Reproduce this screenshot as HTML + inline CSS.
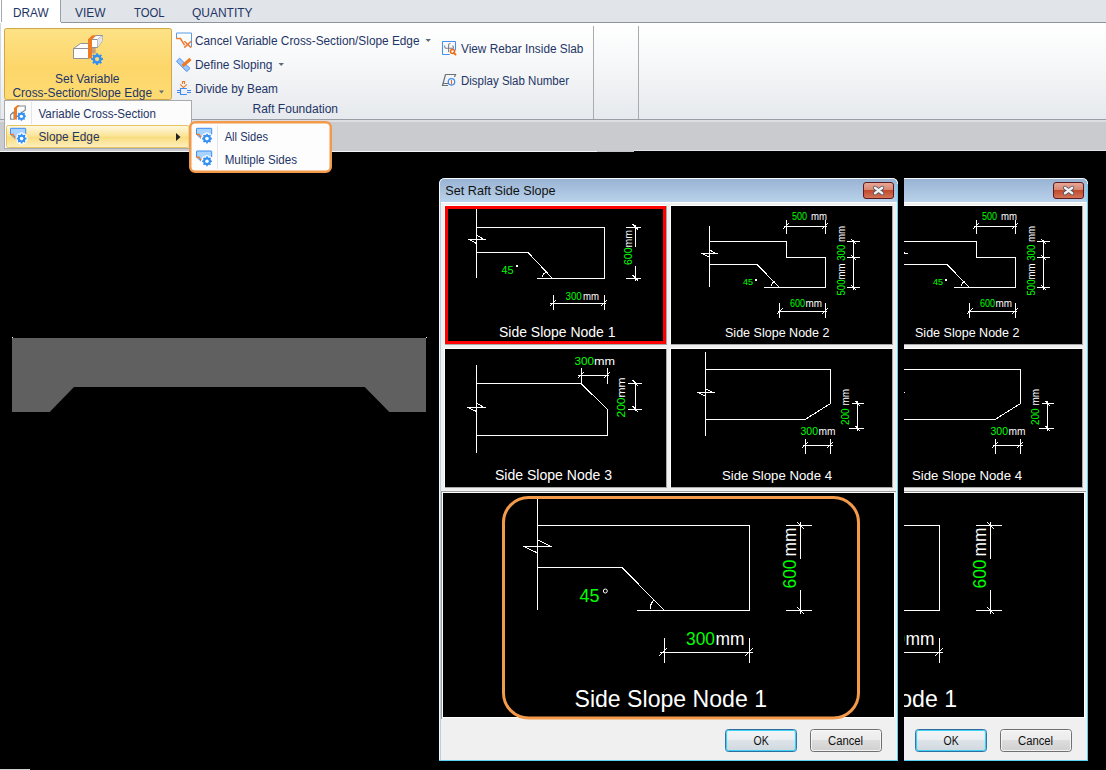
<!DOCTYPE html><html><head><meta charset="utf-8"><style>html,body{margin:0;padding:0;background:#000;overflow:hidden}svg{display:block}text{font-family:"Liberation Sans",sans-serif}</style></head><body>
<svg width="1106" height="770" viewBox="0 0 1106 770">
<defs>
<linearGradient id="gRib" x1="0" y1="0" x2="0" y2="1"><stop offset="0" stop-color="#ffffff"/><stop offset="0.35" stop-color="#f8f9fa"/><stop offset="1" stop-color="#e6e9ed"/></linearGradient>
<linearGradient id="gBig" x1="0" y1="0" x2="0" y2="1"><stop offset="0" stop-color="#fde286"/><stop offset="0.55" stop-color="#fdd66a"/><stop offset="1" stop-color="#fddb72"/></linearGradient>
<linearGradient id="gHi" x1="0" y1="0" x2="0" y2="1"><stop offset="0" stop-color="#fef9e2"/><stop offset="0.45" stop-color="#fbe59a"/><stop offset="0.55" stop-color="#f9dd80"/><stop offset="1" stop-color="#fdf0c0"/></linearGradient>
<linearGradient id="gTitle" x1="0" y1="0" x2="0" y2="1"><stop offset="0" stop-color="#98b3d3"/><stop offset="1" stop-color="#bad2eb"/></linearGradient>
<linearGradient id="gClose" x1="0" y1="0" x2="0" y2="1"><stop offset="0" stop-color="#eaa99a"/><stop offset="0.45" stop-color="#d88870"/><stop offset="0.5" stop-color="#c24a2c"/><stop offset="1" stop-color="#d5765a"/></linearGradient>
<linearGradient id="gOK" x1="0" y1="0" x2="0" y2="1"><stop offset="0" stop-color="#f2f4f6"/><stop offset="0.45" stop-color="#eceff2"/><stop offset="0.5" stop-color="#dde3e8"/><stop offset="1" stop-color="#cfd8df"/></linearGradient>
<linearGradient id="gCan" x1="0" y1="0" x2="0" y2="1"><stop offset="0" stop-color="#f2f2f2"/><stop offset="0.5" stop-color="#ebebeb"/><stop offset="0.5" stop-color="#dddddd"/><stop offset="1" stop-color="#cfcfcf"/></linearGradient>
<clipPath id="clipR"><rect x="904" y="0" width="202" height="770"/></clipPath>
</defs>
<rect x="0" y="0" width="1106" height="23" fill="#e1e4e8" />
<rect x="0" y="23" width="1106" height="96" fill="url(#gRib)" />
<line x1="0" y1="22.5" x2="1106" y2="22.5" stroke="#8f959c" stroke-width="1" />
<rect x="0" y="0" width="61" height="23" fill="#ffffff" />
<line x1="1.5" y1="0" x2="1.5" y2="22" stroke="#a4a9b0" stroke-width="1" />
<line x1="0.5" y1="23" x2="0.5" y2="119" stroke="#d4d7db" stroke-width="1" />
<line x1="60.5" y1="0" x2="60.5" y2="22" stroke="#9aa0a7" stroke-width="1" />
<line x1="0" y1="119.5" x2="1106" y2="119.5" stroke="#9a9ea4" stroke-width="1" />
<rect x="0" y="120" width="1106" height="31" fill="#c9cbcf" />
<rect x="0" y="120" width="1106" height="2" fill="#dcdee1" />
<line x1="593.5" y1="26" x2="593.5" y2="119" stroke="#a9adb2" stroke-width="1" />
<line x1="638.5" y1="26" x2="638.5" y2="119" stroke="#a9adb2" stroke-width="1" />
<text x="13" y="17" font-size="12" fill="#1e3566" textLength="35.5" lengthAdjust="spacingAndGlyphs" >DRAW</text>
<text x="75" y="17" font-size="12" fill="#1e3566" textLength="30.5" lengthAdjust="spacingAndGlyphs" >VIEW</text>
<text x="134" y="17" font-size="12" fill="#1e3566" textLength="30.5" lengthAdjust="spacingAndGlyphs" >TOOL</text>
<text x="192" y="17" font-size="12" fill="#1e3566" textLength="60.5" lengthAdjust="spacingAndGlyphs" >QUANTITY</text>
<rect x="4.5" y="28.5" width="167" height="71" rx="2" ry="2" fill="url(#gBig)" stroke="#cfa748" stroke-width="1"/>
<g stroke-linejoin="round">
<path d="M73.5 48.5 L80.5 43.5 L88.5 43.5 L88.5 58.5 L73.5 58.5 Z" fill="#fff" stroke="#8e9196" stroke-width="1"/>
<path d="M73.5 48.5 L88.5 48.5" stroke="#8e9196" stroke-width="1" fill="none"/>
<rect x="92" y="47.5" width="3.7" height="6" fill="#c9a07e"/>
<path d="M91.5 39.5 L96 35.5 L102.5 35.5 L102.5 40.5 L97.5 47.5 L91.5 47.5 Z" fill="#fff" stroke="#8e9196" stroke-width="1"/>
<path d="M91.5 39.5 L97.5 39.5 L102.5 35.5 M97.5 39.5 L97.5 47.5" stroke="#8e9196" stroke-width="1" fill="none"/>
<path d="M97.5 39.5 L102.5 35.5 L102.5 40.5 L97.5 47.5Z" fill="#e4e4e4"/>
<path d="M88 58.6 L88 39.2 L92.2 35.3 L96 35.3 L92 39.2 L92 58.6 Z" fill="#ee7a22"/>
</g>
<polygon points="96.17,54.64 96.11,53.18 98.09,53.18 98.03,54.64 99.60,55.28 100.59,54.22 101.98,55.61 100.92,56.60 101.56,58.17 103.02,58.11 103.02,60.09 101.56,60.03 100.92,61.60 101.98,62.59 100.59,63.98 99.60,62.92 98.03,63.56 98.09,65.02 96.11,65.02 96.17,63.56 94.60,62.92 93.61,63.98 92.22,62.59 93.28,61.60 92.64,60.03 91.18,60.09 91.18,58.11 92.64,58.17 93.28,56.60 92.22,55.61 93.61,54.22 94.60,55.28" fill="#3390f5"/>
<circle cx="97.1" cy="59.1" r="4.56" fill="#3390f5"/>
<circle cx="97.1" cy="59.1" r="2.16" fill="#fddb72"/>
<text x="55" y="82.7" font-size="12" fill="#1e3566" textLength="64.5" lengthAdjust="spacingAndGlyphs" >Set Variable</text>
<text x="12.5" y="96.5" font-size="12" fill="#1e3566" textLength="139.5" lengthAdjust="spacingAndGlyphs" >Cross-Section/Slope Edge</text>
<path d="M159 90.5 L164 90.5 L161.5 93.5 Z" fill="#5e6b7c"/>
<text x="195" y="45" font-size="12" fill="#1e3566" textLength="224.5" lengthAdjust="spacingAndGlyphs" >Cancel Variable Cross-Section/Slope Edge</text>
<path d="M425.5 39 L431 39 L428.2 42 Z" fill="#5e6b7c"/>
<text x="195" y="69" font-size="12" fill="#1e3566" textLength="77.5" lengthAdjust="spacingAndGlyphs" >Define Sloping</text>
<path d="M278.5 63 L284 63 L281.2 66 Z" fill="#5e6b7c"/>
<text x="195" y="92.6" font-size="12" fill="#1e3566" textLength="83" lengthAdjust="spacingAndGlyphs" >Divide by Beam</text>
<text x="252.5" y="113.4" font-size="12" fill="#1e3566" textLength="85.5" lengthAdjust="spacingAndGlyphs" >Raft Foundation</text>
<text x="461" y="52.5" font-size="12" fill="#1e3566" textLength="122.4" lengthAdjust="spacingAndGlyphs" >View Rebar Inside Slab</text>
<text x="461" y="84.5" font-size="12" fill="#1e3566" textLength="108" lengthAdjust="spacingAndGlyphs" >Display Slab Number</text>
<g fill="none" stroke-width="1.3">
<path d="M176.5 38.5 L176.5 33 L191.5 33 L191.5 47" stroke="#5b9bea" stroke-width="1"/>
<path d="M176.2 38.6 L180.4 38.6 L184.6 45.2 M184.3 41.2 L191.2 47.6 M184.3 47.6 L191.2 41.2" stroke="#ee7a2e" stroke-width="1.5"/>
<path d="M176.5 61.3 L179.6 58.2 L190 68.4 L186.7 71.6 Z" fill="#9cc8ff" stroke="#4f8fe6" stroke-width="1"/>
<path d="M182.5 66 L190.5 59" stroke="#ee7a22" stroke-width="3"/>
<path d="M182.5 84 L182.5 81.5 L184.5 81.5 L184.5 84" stroke="#f07a1e" stroke-width="1.1"/>
<path d="M180.2 84.4 L183.5 87.6 L186.8 84.4" stroke="#f07a1e" stroke-width="1.1"/>
<path d="M186.8 88.5 L180.5 88.5 L180.5 94.5 L186.8 94.5 M177 90.5 L180.5 90.5 M177 92.5 L180.5 92.5 M187 90.5 L191 90.5 M187 92.5 L191 92.5" stroke="#3d8af5" stroke-width="1.1"/>
<path d="M449.8 54.5 L443 54.5 Q442.5 54.5 442.5 54 L442.5 42 Q442.5 41.5 443 41.5 L455 41.5 Q455.5 41.5 455.5 42 L455.5 50.5" stroke="#4a90f0" stroke-width="1.1"/>
<path d="M444.7 45.5 Q444.5 48.3 446 48.3 L453.5 48.3 Q453.5 46 452.5 45.5 M448.6 52 L448.6 45 Q448.6 43.5 450.5 43.5" stroke="#7b8088" stroke-width="1.1"/>
<circle cx="452.5" cy="51.5" r="2" stroke="#f06a10" stroke-width="1.5" fill="#fff"/>
<path d="M454 53 L455.6 54.6" stroke="#f06a10" stroke-width="1.8" stroke-linecap="round"/>
<path d="M445.5 74.5 L455.5 74.5 L454.5 77 M445.5 74.5 L442.5 85.5 L448 85.5 M443.5 83.5 L448 83.5" stroke="#6c7178" stroke-width="1.2"/>
<circle cx="451.5" cy="81.8" r="3.2" stroke="#3d8ef0" stroke-width="1.3" fill="#fff"/>
<path d="M451.5 80 L451.5 84.5" stroke="#ee6a1e" stroke-width="1.2"/>
</g>
<rect x="0" y="151" width="1106" height="619" fill="#000" />
<rect x="0" y="150" width="634" height="1" fill="#c9cbcf" />
<rect x="0" y="151" width="597" height="1" fill="#f4f4f4" />
<rect x="597" y="151" width="37" height="1" fill="#c4c6c9" />
<rect x="634" y="150" width="472" height="1" fill="#e2e4e7" />
<path d="M12 338 L426 338 L426 412 L389.3 412 L364.7 387 L74 387 L49.7 412 L12 412 Z" fill="#606060"/>
<rect x="12" y="337" width="1" height="1" fill="#fff" />
<rect x="426" y="337" width="1" height="1" fill="#fff" />
<rect x="0" y="769" width="30" height="1" fill="#d0d0d0" />
<rect x="4.5" y="100.5" width="187" height="48" fill="#fcfcfc" stroke="#a7abb0"/>
<line x1="31.5" y1="102" x2="31.5" y2="124" stroke="#e2e4e7" stroke-width="1" />
<text x="38.5" y="117.6" font-size="12" fill="#1e3566" textLength="117.4" lengthAdjust="spacingAndGlyphs" >Variable Cross-Section</text>
<rect x="6.5" y="125.5" width="182.5" height="22" rx="2" fill="url(#gHi)" stroke="#e5c365"/>
<text x="38.5" y="140.6" font-size="12" fill="#1e3566" textLength="61" lengthAdjust="spacingAndGlyphs" >Slope Edge</text>
<path d="M176 133 L180.5 137 L176 141 Z" fill="#222"/>
<g>
<path d="M10.6 119.3 L10.6 114.9 L13.5 112 M10.6 114.9 L14.3 114.9" fill="none" stroke="#858990" stroke-width="1.2"/>
<path d="M10.6 114.9 L14 112 L14 119.3 L10.6 119.3Z" fill="#fff" stroke="#858990" stroke-width="1.1"/>
<path d="M17.5 106 L25.3 106 L25.3 110 L22 112.5" fill="none" stroke="#858990" stroke-width="1.1"/>
<path d="M14 119.6 L14 108 L17.5 105.2 L20 105.2 L17 108 L17 119.6Z" fill="#ee7a22"/>
</g>
<polygon points="20.68,112.88 20.64,111.76 22.16,111.76 22.12,112.88 23.31,113.37 24.07,112.56 25.14,113.63 24.33,114.39 24.82,115.58 25.94,115.54 25.94,117.06 24.82,117.02 24.33,118.21 25.14,118.97 24.07,120.04 23.31,119.23 22.12,119.72 22.16,120.84 20.64,120.84 20.68,119.72 19.49,119.23 18.73,120.04 17.66,118.97 18.47,118.21 17.98,117.02 16.86,117.06 16.86,115.54 17.98,115.58 18.47,114.39 17.66,113.63 18.73,112.56 19.49,113.37" fill="#3390f5"/>
<circle cx="21.4" cy="116.3" r="3.50" fill="#3390f5"/>
<circle cx="21.4" cy="116.3" r="1.66" fill="#fff"/>
<path d="M10.5 134.3 L10.5 128.8 Q10.5 128.3 11 128.3 L25.2 128.3 Q25.7 128.3 25.7 128.8 L25.7 134 L17 140 Z" fill="#a8d2ff" stroke="#3d8ef0" stroke-width="1"/>
<path d="M10.2 134.4 L13 134.4 L17 140.3" fill="none" stroke="#ee7a22" stroke-width="1.3"/>
<polygon points="20.82,134.88 20.78,133.67 22.42,133.67 22.38,134.88 23.68,135.42 24.51,134.53 25.67,135.69 24.78,136.52 25.32,137.82 26.53,137.78 26.53,139.42 25.32,139.38 24.78,140.68 25.67,141.51 24.51,142.67 23.68,141.78 22.38,142.32 22.42,143.53 20.78,143.53 20.82,142.32 19.52,141.78 18.69,142.67 17.53,141.51 18.42,140.68 17.88,139.38 16.67,139.42 16.67,137.78 17.88,137.82 18.42,136.52 17.53,135.69 18.69,134.53 19.52,135.42" fill="#fff" stroke="#fff" stroke-width="2.2" stroke-linejoin="round"/>
<polygon points="20.82,134.88 20.78,133.67 22.42,133.67 22.38,134.88 23.68,135.42 24.51,134.53 25.67,135.69 24.78,136.52 25.32,137.82 26.53,137.78 26.53,139.42 25.32,139.38 24.78,140.68 25.67,141.51 24.51,142.67 23.68,141.78 22.38,142.32 22.42,143.53 20.78,143.53 20.82,142.32 19.52,141.78 18.69,142.67 17.53,141.51 18.42,140.68 17.88,139.38 16.67,139.42 16.67,137.78 17.88,137.82 18.42,136.52 17.53,135.69 18.69,134.53 19.52,135.42" fill="#3390f5"/>
<circle cx="21.6" cy="138.6" r="3.80" fill="#3390f5"/>
<circle cx="21.6" cy="138.6" r="1.80" fill="#fff"/>
<rect x="190.25" y="122.25" width="140.5" height="49.5" rx="5" ry="5" fill="#fdfdfd" stroke="#f29a4a" stroke-width="2.5"/>
<line x1="217.5" y1="126" x2="217.5" y2="169" stroke="#e2e4e7" stroke-width="1" />
<text x="224.7" y="141" font-size="12" fill="#1e3566" textLength="43.3" lengthAdjust="spacingAndGlyphs" >All Sides</text>
<text x="224.7" y="163.8" font-size="12" fill="#1e3566" textLength="72.3" lengthAdjust="spacingAndGlyphs" >Multiple Sides</text>
<path d="M196.5 134.3 L196.5 128.8 Q196.5 128.3 197 128.3 L211.2 128.3 Q211.7 128.3 211.7 128.8 L211.7 134.3 L203 140.3 Z" fill="#a8d2ff" stroke="#3d8ef0" stroke-width="1"/>
<path d="M196.2 134.4 L199 134.4 L203 140.3" fill="none" stroke="#ee7a22" stroke-width="1.3"/>
<polygon points="206.22,134.88 206.18,133.67 207.82,133.67 207.78,134.88 209.08,135.42 209.91,134.53 211.07,135.69 210.18,136.52 210.72,137.82 211.93,137.78 211.93,139.42 210.72,139.38 210.18,140.68 211.07,141.51 209.91,142.67 209.08,141.78 207.78,142.32 207.82,143.53 206.18,143.53 206.22,142.32 204.92,141.78 204.09,142.67 202.93,141.51 203.82,140.68 203.28,139.38 202.07,139.42 202.07,137.78 203.28,137.82 203.82,136.52 202.93,135.69 204.09,134.53 204.92,135.42" fill="#fff" stroke="#fff" stroke-width="2.2" stroke-linejoin="round"/>
<polygon points="206.22,134.88 206.18,133.67 207.82,133.67 207.78,134.88 209.08,135.42 209.91,134.53 211.07,135.69 210.18,136.52 210.72,137.82 211.93,137.78 211.93,139.42 210.72,139.38 210.18,140.68 211.07,141.51 209.91,142.67 209.08,141.78 207.78,142.32 207.82,143.53 206.18,143.53 206.22,142.32 204.92,141.78 204.09,142.67 202.93,141.51 203.82,140.68 203.28,139.38 202.07,139.42 202.07,137.78 203.28,137.82 203.82,136.52 202.93,135.69 204.09,134.53 204.92,135.42" fill="#3390f5"/>
<circle cx="207" cy="138.60000000000002" r="3.80" fill="#3390f5"/>
<circle cx="207" cy="138.60000000000002" r="1.80" fill="#fff"/>
<path d="M196.5 157 L196.5 151.5 Q196.5 151 197 151 L211.2 151 Q211.7 151 211.7 151.5 L211.7 157 L203 163 Z" fill="#a8d2ff" stroke="#3d8ef0" stroke-width="1"/>
<path d="M196.2 157.1 L199 157.1 L203 163" fill="none" stroke="#ee7a22" stroke-width="1.3"/>
<polygon points="206.22,157.58 206.18,156.37 207.82,156.37 207.78,157.58 209.08,158.12 209.91,157.23 211.07,158.39 210.18,159.22 210.72,160.52 211.93,160.48 211.93,162.12 210.72,162.08 210.18,163.38 211.07,164.21 209.91,165.37 209.08,164.48 207.78,165.02 207.82,166.23 206.18,166.23 206.22,165.02 204.92,164.48 204.09,165.37 202.93,164.21 203.82,163.38 203.28,162.08 202.07,162.12 202.07,160.48 203.28,160.52 203.82,159.22 202.93,158.39 204.09,157.23 204.92,158.12" fill="#fff" stroke="#fff" stroke-width="2.2" stroke-linejoin="round"/>
<polygon points="206.22,157.58 206.18,156.37 207.82,156.37 207.78,157.58 209.08,158.12 209.91,157.23 211.07,158.39 210.18,159.22 210.72,160.52 211.93,160.48 211.93,162.12 210.72,162.08 210.18,163.38 211.07,164.21 209.91,165.37 209.08,164.48 207.78,165.02 207.82,166.23 206.18,166.23 206.22,165.02 204.92,164.48 204.09,165.37 202.93,164.21 203.82,163.38 203.28,162.08 202.07,162.12 202.07,160.48 203.28,160.52 203.82,159.22 202.93,158.39 204.09,157.23 204.92,158.12" fill="#3390f5"/>
<circle cx="207" cy="161.3" r="3.80" fill="#3390f5"/>
<circle cx="207" cy="161.3" r="1.80" fill="#fff"/>
<g id="dlg">
<path d="M439 761 L439 184 Q439 178 445 178 L892 178 Q898 178 898 184 L898 761 Z" fill="#bcd4ec"/>
<path d="M439.5 761 L439.5 184 Q439.5 178.5 445 178.5 L892 178.5 Q897.5 178.5 897.5 184 L897.5 761" fill="none" stroke="#ffffff" stroke-width="1" opacity="0.85"/>
<path d="M440 202 L440 184 Q440 179 445 179 L892 179 Q897 179 897 184 L897 202 Z" fill="url(#gTitle)"/>
<line x1="897.5" y1="184" x2="897.5" y2="761" stroke="#5fd0f2" stroke-width="1" />
<line x1="439" y1="760.5" x2="898" y2="760.5" stroke="#5fd0f2" stroke-width="1" />
<line x1="440.5" y1="202" x2="440.5" y2="760" stroke="#b7d0ea" stroke-width="1" />
<rect x="441" y="202" width="456" height="558" fill="#f0f0f0" />
<line x1="441" y1="202.5" x2="896" y2="202.5" stroke="#ffffff" stroke-width="1" />
<text x="445.3" y="194.5" font-size="12.6" fill="#111" textLength="110.3" lengthAdjust="spacingAndGlyphs" >Set Raft Side Slope</text>
<rect x="863.5" y="182.5" width="30" height="16" rx="2.5" ry="2.5" fill="url(#gClose)" stroke="#5a1a1f" stroke-width="1"/>
<path d="M875 187.8 L882.2 193.2 M882.2 187.8 L875 193.2" stroke="#4a5466" stroke-width="4" stroke-linecap="round"/>
<path d="M875 187.8 L882.2 193.2 M882.2 187.8 L875 193.2" stroke="#f4f4f4" stroke-width="2.4" stroke-linecap="round"/>
<rect x="445" y="206" width="221" height="138" fill="#000" />
<line x1="444" y1="205.5" x2="666" y2="205.5" stroke="#ffffff" stroke-width="1" />
<line x1="444.5" y1="205" x2="444.5" y2="344" stroke="#ffffff" stroke-width="1" />
<line x1="445" y1="344.5" x2="667" y2="344.5" stroke="#a8a8a8" stroke-width="1" />
<line x1="666.5" y1="206" x2="666.5" y2="344" stroke="#a8a8a8" stroke-width="1" />
<rect x="671" y="206" width="221" height="138" fill="#000" />
<line x1="670" y1="205.5" x2="892" y2="205.5" stroke="#ffffff" stroke-width="1" />
<line x1="670.5" y1="205" x2="670.5" y2="344" stroke="#ffffff" stroke-width="1" />
<line x1="671" y1="344.5" x2="893" y2="344.5" stroke="#a8a8a8" stroke-width="1" />
<line x1="892.5" y1="206" x2="892.5" y2="344" stroke="#a8a8a8" stroke-width="1" />
<rect x="445" y="349" width="221" height="138" fill="#000" />
<line x1="444" y1="348.5" x2="666" y2="348.5" stroke="#ffffff" stroke-width="1" />
<line x1="444.5" y1="348" x2="444.5" y2="487" stroke="#ffffff" stroke-width="1" />
<line x1="445" y1="487.5" x2="667" y2="487.5" stroke="#a8a8a8" stroke-width="1" />
<line x1="666.5" y1="349" x2="666.5" y2="487" stroke="#a8a8a8" stroke-width="1" />
<rect x="671" y="349" width="221" height="138" fill="#000" />
<line x1="670" y1="348.5" x2="892" y2="348.5" stroke="#ffffff" stroke-width="1" />
<line x1="670.5" y1="348" x2="670.5" y2="487" stroke="#ffffff" stroke-width="1" />
<line x1="671" y1="487.5" x2="893" y2="487.5" stroke="#a8a8a8" stroke-width="1" />
<line x1="892.5" y1="349" x2="892.5" y2="487" stroke="#a8a8a8" stroke-width="1" />
<line x1="441" y1="491.5" x2="896" y2="491.5" stroke="#a0a0a0" stroke-width="1" />
<line x1="441.5" y1="491" x2="441.5" y2="719" stroke="#a0a0a0" stroke-width="1" />
<line x1="442" y1="492.5" x2="895" y2="492.5" stroke="#ffffff" stroke-width="1" />
<line x1="442.5" y1="492" x2="442.5" y2="718" stroke="#ffffff" stroke-width="1" />
<rect x="443" y="493" width="451" height="224" fill="#000" />
<line x1="894.5" y1="493" x2="894.5" y2="718" stroke="#ffffff" stroke-width="1" />
<line x1="443" y1="717.5" x2="895" y2="717.5" stroke="#ffffff" stroke-width="1" />
<rect x="446.5" y="207.5" width="218" height="135" fill="none" stroke="#ff0000" stroke-width="3"/>
<g shape-rendering="crispEdges">
<line x1="476.5" y1="209" x2="476.5" y2="278" stroke="#fff" stroke-width="1" />
<line x1="476" y1="227.5" x2="605" y2="227.5" stroke="#fff" stroke-width="1" />
<line x1="604.5" y1="227" x2="604.5" y2="279" stroke="#fff" stroke-width="1" />
<line x1="537" y1="278.5" x2="605" y2="278.5" stroke="#fff" stroke-width="1" />
<line x1="476" y1="252.5" x2="528" y2="252.5" stroke="#fff" stroke-width="1" />
</g>
<path d="M528 252.5 L552.5 278.5" stroke="#fff" stroke-width="1" fill="none" shape-rendering="crispEdges"/>
<path d="M468 239.5 L486 239.5 M469 239.5 L476.5 243.5 M477.0 235.5 L484 239.5" stroke="#fff" stroke-width="1" fill="none" shape-rendering="crispEdges"/>
<path d="M542 277 A10 10 0 0 1 546.5 271.5" stroke="#fff" stroke-width="1" fill="none" shape-rendering="crispEdges"/>
<text x="501.5" y="274" font-size="10.5" fill="#00ff00" textLength="12" lengthAdjust="spacingAndGlyphs" >45</text>
<rect x="516" y="265" width="2" height="2" fill="#fff" />
<g shape-rendering="crispEdges">
<line x1="635.5" y1="225" x2="635.5" y2="247" stroke="#fff" stroke-width="1" />
<line x1="635.5" y1="266" x2="635.5" y2="281" stroke="#fff" stroke-width="1" />
<line x1="626" y1="227.5" x2="641" y2="227.5" stroke="#fff" stroke-width="1" />
<line x1="626" y1="278.5" x2="641" y2="278.5" stroke="#fff" stroke-width="1" />
<line x1="550" y1="303.5" x2="606" y2="303.5" stroke="#fff" stroke-width="1" />
<line x1="553.5" y1="295" x2="553.5" y2="310" stroke="#fff" stroke-width="1" />
<line x1="604.5" y1="295" x2="604.5" y2="310" stroke="#fff" stroke-width="1" />
</g>
<path d="M632.5 224 L638 229.5 M632.5 275 L638 280.5 M550 306 L556 300 M601 306 L607 300" stroke="#fff" stroke-width="1" fill="none" shape-rendering="crispEdges"/>
<g transform="translate(632,265) rotate(-90)">
<text x="0" y="0" font-size="10.5" textLength="35" lengthAdjust="spacingAndGlyphs"><tspan fill="#00ff00">600</tspan><tspan fill="#fff">mm</tspan></text>
</g>
<text x="565.5" y="300" font-size="10" fill="#00ff00" textLength="16.3" lengthAdjust="spacingAndGlyphs" >300</text>
<text x="583" y="300" font-size="10" fill="#fff" textLength="16" lengthAdjust="spacingAndGlyphs" >mm</text>
<text x="499" y="336.5" font-size="14" fill="#fff" textLength="116.5" lengthAdjust="spacingAndGlyphs" >Side Slope Node 1</text>
<g shape-rendering="crispEdges">
<line x1="709.5" y1="226" x2="709.5" y2="287" stroke="#fff" stroke-width="1" />
<line x1="709" y1="241.5" x2="787" y2="241.5" stroke="#fff" stroke-width="1" />
<line x1="786.5" y1="241" x2="786.5" y2="258" stroke="#fff" stroke-width="1" />
<line x1="786" y1="257.5" x2="826" y2="257.5" stroke="#fff" stroke-width="1" />
<line x1="825.5" y1="257" x2="825.5" y2="288" stroke="#fff" stroke-width="1" />
<line x1="764" y1="287.5" x2="826" y2="287.5" stroke="#fff" stroke-width="1" />
<line x1="709" y1="264.5" x2="757" y2="264.5" stroke="#fff" stroke-width="1" />
<line x1="784" y1="226.5" x2="827" y2="226.5" stroke="#fff" stroke-width="1" />
<line x1="786.5" y1="220" x2="786.5" y2="234" stroke="#fff" stroke-width="1" />
<line x1="825.5" y1="220" x2="825.5" y2="234" stroke="#fff" stroke-width="1" />
<line x1="853.5" y1="240" x2="853.5" y2="290" stroke="#fff" stroke-width="1" />
<line x1="847" y1="241.5" x2="860" y2="241.5" stroke="#fff" stroke-width="1" />
<line x1="847" y1="257.5" x2="860" y2="257.5" stroke="#fff" stroke-width="1" />
<line x1="847" y1="287.5" x2="860" y2="287.5" stroke="#fff" stroke-width="1" />
<line x1="778" y1="311.5" x2="827" y2="311.5" stroke="#fff" stroke-width="1" />
<line x1="779.5" y1="303" x2="779.5" y2="318" stroke="#fff" stroke-width="1" />
<line x1="825.5" y1="303" x2="825.5" y2="318" stroke="#fff" stroke-width="1" />
</g>
<path d="M757 264.5 L779.5 287.5" stroke="#fff" stroke-width="1" fill="none" shape-rendering="crispEdges"/>
<path d="M701 253.5 L718 253.5 M702 253.5 L709 257.0 M709.5 250.0 L716 253.5" stroke="#fff" stroke-width="1" fill="none" shape-rendering="crispEdges"/>
<path d="M771 286 A9 9 0 0 1 774.5 281" stroke="#fff" stroke-width="1" fill="none" shape-rendering="crispEdges"/>
<path d="M783 229 L789 223 M822 229 L828 223 M851 239 L856 244 M851 255 L856 260 M851 285 L856 290 M777 314 L783 308 M822 314 L828 308" stroke="#fff" stroke-width="1" fill="none" shape-rendering="crispEdges"/>
<text x="743" y="285" font-size="9.5" fill="#00ff00" textLength="10" lengthAdjust="spacingAndGlyphs" >45</text>
<rect x="755" y="279" width="2" height="2" fill="#fff" />
<text x="792" y="220" font-size="10" fill="#00ff00" textLength="15" lengthAdjust="spacingAndGlyphs" >500</text>
<text x="811" y="220" font-size="10" fill="#fff" textLength="16" lengthAdjust="spacingAndGlyphs" >mm</text>
<g transform="translate(845,295.5) rotate(-90)">
<text x="0" y="0" font-size="10" textLength="69.5" lengthAdjust="spacingAndGlyphs"><tspan fill="#00ff00">500</tspan><tspan fill="#fff">mm</tspan><tspan fill="#fff"> </tspan><tspan fill="#00ff00">300</tspan><tspan fill="#fff"> </tspan><tspan fill="#fff">mm</tspan></text>
</g>
<text x="790" y="307" font-size="10" fill="#00ff00" textLength="15" lengthAdjust="spacingAndGlyphs" >600</text>
<text x="805.5" y="307" font-size="10" fill="#fff" textLength="16.5" lengthAdjust="spacingAndGlyphs" >mm</text>
<text x="725" y="336.5" font-size="12.5" fill="#fff" textLength="104.5" lengthAdjust="spacingAndGlyphs" >Side Slope Node 2</text>
<g shape-rendering="crispEdges">
<line x1="476.5" y1="365" x2="476.5" y2="453" stroke="#fff" stroke-width="1" />
<line x1="476" y1="383.5" x2="581" y2="383.5" stroke="#fff" stroke-width="1" />
<line x1="607.5" y1="409" x2="607.5" y2="436" stroke="#fff" stroke-width="1" />
<line x1="476" y1="435.5" x2="608" y2="435.5" stroke="#fff" stroke-width="1" />
<line x1="578" y1="375.5" x2="609" y2="375.5" stroke="#fff" stroke-width="1" />
<line x1="581.5" y1="368" x2="581.5" y2="384" stroke="#fff" stroke-width="1" />
<line x1="607.5" y1="368" x2="607.5" y2="384" stroke="#fff" stroke-width="1" />
<line x1="635.5" y1="382" x2="635.5" y2="411" stroke="#fff" stroke-width="1" />
<line x1="628" y1="383.5" x2="642" y2="383.5" stroke="#fff" stroke-width="1" />
<line x1="628" y1="409.5" x2="642" y2="409.5" stroke="#fff" stroke-width="1" />
</g>
<path d="M581 383.5 L607.5 409.5" stroke="#fff" stroke-width="1" fill="none" shape-rendering="crispEdges"/>
<path d="M467 407.5 L486 407.5 M468 407.5 L476.5 411.5 M477.0 403.5 L484 407.5" stroke="#fff" stroke-width="1" fill="none" shape-rendering="crispEdges"/>
<path d="M578 378 L584 372 M604 378 L610 372 M632.5 380 L638 386 M632.5 406 L638 412" stroke="#fff" stroke-width="1" fill="none" shape-rendering="crispEdges"/>
<text x="574.5" y="365" font-size="11.5" fill="#00ff00" textLength="19.5" lengthAdjust="spacingAndGlyphs" >300</text>
<text x="594" y="365" font-size="11.5" fill="#fff" textLength="21" lengthAdjust="spacingAndGlyphs" >mm</text>
<g transform="translate(625,417.5) rotate(-90)">
<text x="0" y="0" font-size="11" textLength="40" lengthAdjust="spacingAndGlyphs"><tspan fill="#00ff00">200</tspan><tspan fill="#fff">mm</tspan></text>
</g>
<text x="495" y="479.5" font-size="14" fill="#fff" textLength="117" lengthAdjust="spacingAndGlyphs" >Side Slope Node 3</text>
<g shape-rendering="crispEdges">
<line x1="705.5" y1="352" x2="705.5" y2="436" stroke="#fff" stroke-width="1" />
<line x1="705" y1="369.5" x2="831" y2="369.5" stroke="#fff" stroke-width="1" />
<line x1="830.5" y1="369" x2="830.5" y2="404" stroke="#fff" stroke-width="1" />
<line x1="705" y1="419.5" x2="805" y2="419.5" stroke="#fff" stroke-width="1" />
<line x1="803" y1="445.5" x2="833" y2="445.5" stroke="#fff" stroke-width="1" />
<line x1="805.5" y1="439" x2="805.5" y2="454" stroke="#fff" stroke-width="1" />
<line x1="830.5" y1="439" x2="830.5" y2="454" stroke="#fff" stroke-width="1" />
<line x1="857.5" y1="401" x2="857.5" y2="431" stroke="#fff" stroke-width="1" />
<line x1="852" y1="403.5" x2="864" y2="403.5" stroke="#fff" stroke-width="1" />
<line x1="849" y1="428.5" x2="864" y2="428.5" stroke="#fff" stroke-width="1" />
</g>
<path d="M830.5 403.5 L805 419.5" stroke="#fff" stroke-width="1" fill="none" shape-rendering="crispEdges"/>
<path d="M697 392.5 L715 392.5 M698 392.5 L705.5 396.0 M706.0 389.0 L713 392.5" stroke="#fff" stroke-width="1" fill="none" shape-rendering="crispEdges"/>
<path d="M802 448 L808 442 M827 448 L833 442 M855.5 401 L860 406 M855.5 426 L860 431" stroke="#fff" stroke-width="1" fill="none" shape-rendering="crispEdges"/>
<text x="800.5" y="435" font-size="10.5" fill="#00ff00" textLength="17.5" lengthAdjust="spacingAndGlyphs" >300</text>
<text x="818.5" y="435" font-size="10.5" fill="#fff" textLength="17" lengthAdjust="spacingAndGlyphs" >mm</text>
<g transform="translate(849,425) rotate(-90)">
<text x="0" y="0" font-size="10" textLength="36" lengthAdjust="spacingAndGlyphs"><tspan fill="#00ff00">200</tspan><tspan fill="#fff"> </tspan><tspan fill="#fff">mm</tspan></text>
</g>
<text x="722" y="479.7" font-size="13" fill="#fff" textLength="110" lengthAdjust="spacingAndGlyphs" >Side Slope Node 4</text>
<g shape-rendering="crispEdges">
<line x1="537.5" y1="499" x2="537.5" y2="610" stroke="#fff" stroke-width="1" />
<line x1="537" y1="525.5" x2="750" y2="525.5" stroke="#fff" stroke-width="1" />
<line x1="749.5" y1="525" x2="749.5" y2="611" stroke="#fff" stroke-width="1" />
<line x1="637" y1="610.5" x2="750" y2="610.5" stroke="#fff" stroke-width="1" />
<line x1="537" y1="567.5" x2="622" y2="567.5" stroke="#fff" stroke-width="1" />
<line x1="800.5" y1="522" x2="800.5" y2="559" stroke="#fff" stroke-width="1" />
<line x1="800.5" y1="590" x2="800.5" y2="614" stroke="#fff" stroke-width="1" />
<line x1="786" y1="525.5" x2="812" y2="525.5" stroke="#fff" stroke-width="1" />
<line x1="786" y1="610.5" x2="812" y2="610.5" stroke="#fff" stroke-width="1" />
<line x1="660" y1="652.5" x2="753" y2="652.5" stroke="#fff" stroke-width="1" />
<line x1="664.5" y1="638" x2="664.5" y2="663" stroke="#fff" stroke-width="1" />
<line x1="749.5" y1="638" x2="749.5" y2="663" stroke="#fff" stroke-width="1" />
</g>
<path d="M622 567.5 L664.5 610.5" stroke="#fff" stroke-width="1" fill="none" shape-rendering="crispEdges"/>
<path d="M523 546.5 L552 546.5 M524 546.5 L537.5 553 M538 540 L551 546.5" stroke="#fff" stroke-width="1" fill="none" shape-rendering="crispEdges"/>
<path d="M650 609 A14 14 0 0 1 654.5 599.5" stroke="#fff" stroke-width="1" fill="none" shape-rendering="crispEdges"/>
<path d="M797 522 L804 529 M797 607 L804 614 M659 656 L667 648 M745 656 L753 648" stroke="#fff" stroke-width="1" fill="none" shape-rendering="crispEdges"/>
<text x="579.5" y="601.7" font-size="17.5" fill="#00ff00" textLength="20" lengthAdjust="spacingAndGlyphs" >45</text>
<circle cx="605.3" cy="591" r="2" fill="none" stroke="#fff" stroke-width="1"/>
<g transform="translate(795.5,588.5) rotate(-90)">
<text x="0" y="0" font-size="17.5" textLength="61" lengthAdjust="spacingAndGlyphs"><tspan fill="#00ff00">600</tspan><tspan fill="#fff" dx="3">mm</tspan></text>
</g>
<text x="686" y="645" font-size="17.5" fill="#00ff00" textLength="29" lengthAdjust="spacingAndGlyphs" >300</text>
<text x="715.5" y="645" font-size="17.5" fill="#fff" textLength="29" lengthAdjust="spacingAndGlyphs" >mm</text>
<text x="574.5" y="707.4" font-size="24" fill="#fff" textLength="192.5" lengthAdjust="spacingAndGlyphs" >Side Slope Node 1</text>
<rect x="725.5" y="729.5" width="71" height="22" rx="3" ry="3" fill="url(#gOK)" stroke="#2f6d9c" stroke-width="1"/>
<rect x="726.5" y="730.5" width="69" height="20" rx="2" ry="2" fill="none" stroke="#40d0f8" stroke-width="1.2"/>
<text x="753.5" y="745" font-size="12" fill="#111" textLength="15.2" lengthAdjust="spacingAndGlyphs" >OK</text>
<rect x="810.5" y="729.5" width="71" height="22" rx="3" ry="3" fill="url(#gCan)" stroke="#707070" stroke-width="1"/>
<rect x="811.5" y="730.5" width="69" height="20" rx="2" ry="2" fill="none" stroke="#fafafa" stroke-width="1" opacity="0.8"/>
<text x="828" y="745" font-size="12" fill="#111" textLength="35.1" lengthAdjust="spacingAndGlyphs" >Cancel</text>
</g>
<g clip-path="url(#clipR)"><use href="#dlg" x="190" y="0"/></g>
<rect x="503.5" y="497.5" width="355" height="220.5" rx="25" ry="25" fill="none" stroke="#f39a4b" stroke-width="3"/>
</svg></body></html>
